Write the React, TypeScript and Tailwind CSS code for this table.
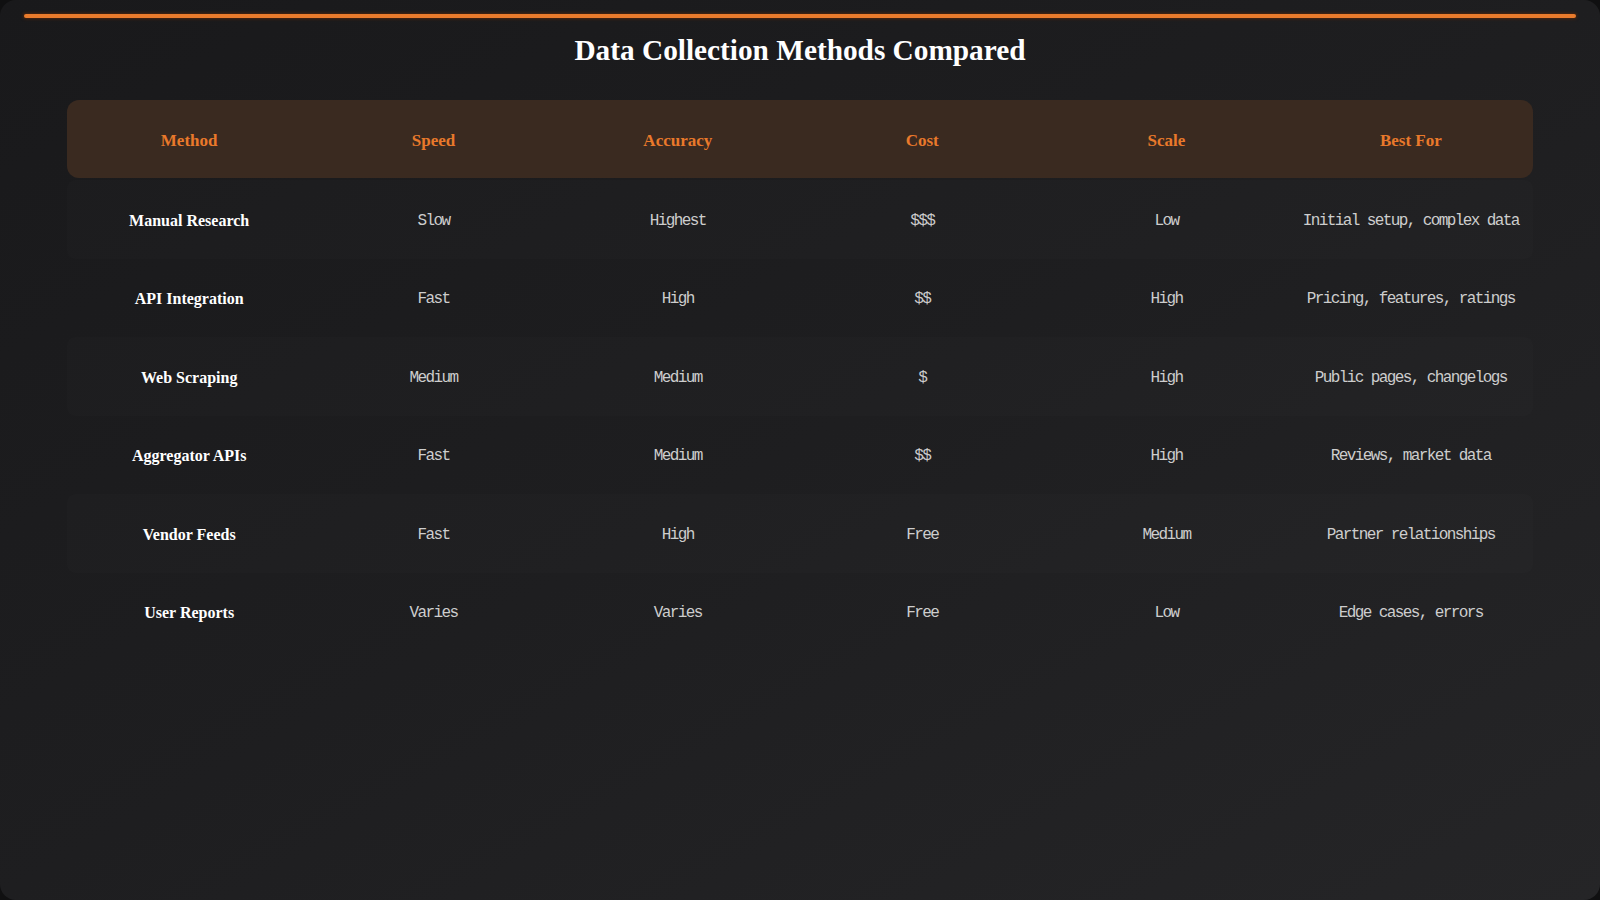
const headers = ["Method", "Speed", "Accuracy", "Cost", "Scale", "Best For"];

const rows = [
  ["Manual Research", "Slow", "Highest", "$$$", "Low", "Initial setup, complex data"],
  ["API Integration", "Fast", "High", "$$", "High", "Pricing, features, ratings"],
  ["Web Scraping", "Medium", "Medium", "$", "High", "Public pages, changelogs"],
  ["Aggregator APIs", "Fast", "Medium", "$$", "High", "Reviews, market data"],
  ["Vendor Feeds", "Fast", "High", "Free", "Medium", "Partner relationships"],
  ["User Reports", "Varies", "Varies", "Free", "Low", "Edge cases, errors"],
];

const serif = "font-['Liberation_Serif','Times_New_Roman',serif]";

const App = () => {
  return (
    <div className="w-[1600px] h-[900px] bg-[#101011]">
      <div className="h-full rounded-2xl bg-gradient-to-br from-[#19191b] via-[#1e1e20] to-[#252527] px-6 pt-[14px]">
        <div className="h-1 rounded-full bg-[#ea7b2c] shadow-[0_0_3px_1px_rgba(90,40,10,0.8)]" />
        <h1 className={`${serif} mt-3 text-center text-[29.3px] leading-10 font-bold text-white`}>
          Data Collection Methods Compared
        </h1>
        <div className="mt-[30px] px-[43px]">
          <div className="grid h-[78px] grid-cols-6 items-center rounded-xl bg-[#3a2a20] pt-[3px] text-center">
            {headers.map((h) => (
              <div key={h} className={`${serif} text-[17px] font-bold text-[#e9792b]`}>
                {h}
              </div>
            ))}
          </div>
          <div className="mt-[2px] flex flex-col">
            {rows.map((row, i) => (
              <div
                key={row[0]}
                className={`grid h-[78.5px] grid-cols-6 items-center rounded-lg pt-[3px] text-center ${
                  i % 2 === 0 ? "bg-white/[0.012]" : "bg-transparent"
                }`}
              >
                {row.map((cell, j) =>
                  j === 0 ? (
                    <div key={j} className={`${serif} text-base font-bold text-white`}>
                      {cell}
                    </div>
                  ) : (
                    <div
                      key={j}
                      className="font-['Liberation_Mono','Courier_New',monospace] text-base tracking-[-1.6px] text-[#cdcdcd]"
                    >
                      {cell}
                    </div>
                  )
                )}
              </div>
            ))}
          </div>
        </div>
      </div>
    </div>
  );
};

export default App;
